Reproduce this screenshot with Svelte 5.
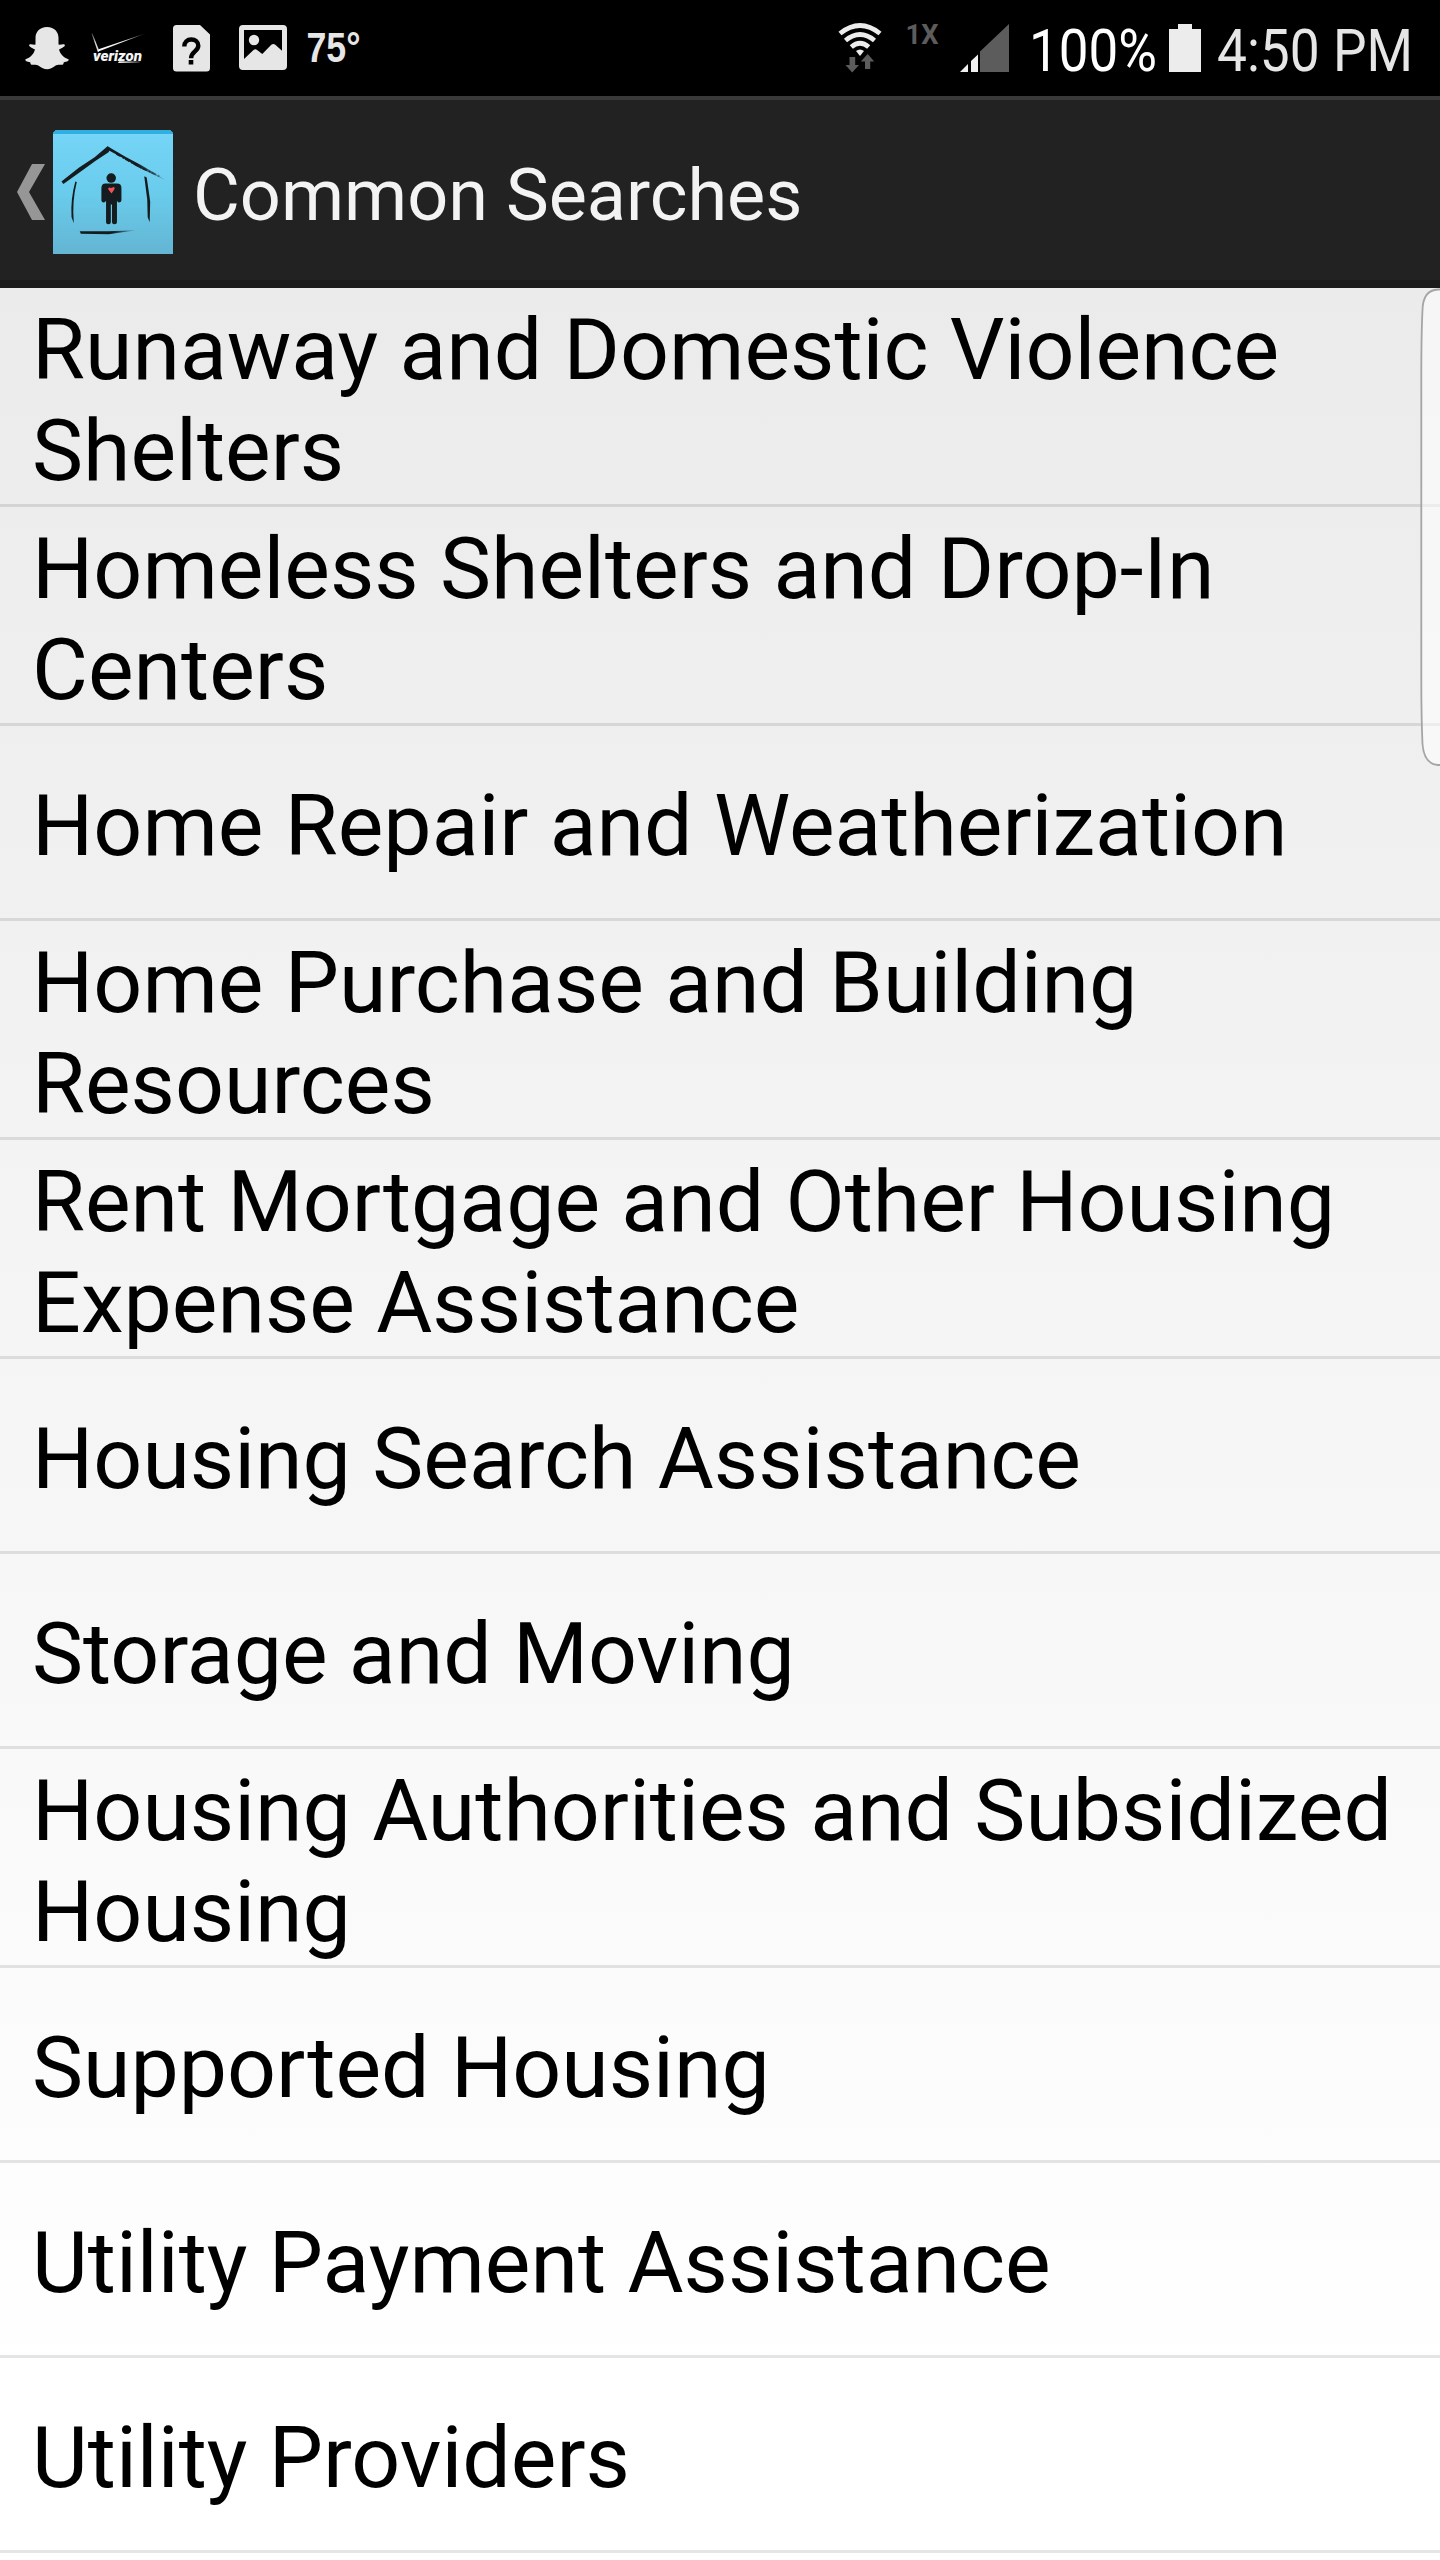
<script>
  const searches = [
    'Runaway and Domestic Violence Shelters',
    'Homeless Shelters and Drop-In Centers',
    'Home Repair and Weatherization',
    'Home Purchase and Building Resources',
    'Rent Mortgage and Other Housing Expense Assistance',
    'Housing Search Assistance',
    'Storage and Moving',
    'Housing Authorities and Subsidized Housing',
    'Supported Housing',
    'Utility Payment Assistance',
    'Utility Providers'
  ];
</script>

<div class="screen">
  <div class="status">
    <div class="group">
      <!-- ghost notification -->
      <svg class="ghost" width="44" height="96" viewBox="25 0 44 96" fill="#e6e6e6">
        <path d="M47 27c7.500 0 11.500 5 11.500 11v6.500c2 .6 5-1.200 6.200.2 1 1.500-2.500 3-5.700 4.800 1.500 5 4.500 8 9.500 9.800.8 1.500-1.500 2.500-4.700 3-.5 1 0 2-1.300 2.400-2.500.3-5-.5-7.500 1.300-2.500 2-5 3.200-8 3.200s-5.500-1.200-8-3.200c-2.500-1.800-5-1-7.500-1.300-1.300-.4-.8-1.400-1.300-2.400-3.200-.5-5.500-1.500-4.700-3 5-1.800 8-4.800 9.500-9.800-3.200-1.800-6.700-3.300-5.700-4.800 1.200-1.400 4.200.4 6.200-.2V38c0-6 4-11 11.500-11z" />
      </svg>
      <!-- carrier -->
      <svg class="carrier" width="55" height="96" viewBox="92 0 55 96">
        <defs>
          <linearGradient id="tail" x1="0" x2="1"><stop offset="0" stop-color="#fff" /><stop offset=".55" stop-color="#eee" /><stop offset="1" stop-color="#444" /></linearGradient>
          <linearGradient id="stem" x1="0" x2="0" y1="0" y2="1"><stop offset="0" stop-color="#444" /><stop offset=".5" stop-color="#eee" /></linearGradient>
          <linearGradient id="under" x1="0" x2="1"><stop offset="0" stop-color="#fff" /><stop offset="1" stop-color="#222" /></linearGradient>
        </defs>
        <path fill="url(#stem)" d="M92 33.500 L99 51 L98 51.500Z" stroke="url(#stem)" stroke-width=".6" />
        <path fill="url(#tail)" d="M97.500 51.500 L98.500 49.300 L146 33.300 L99 51.300Z" />
        <text x="93" y="61" class="verizon" textLength="49" lengthAdjust="spacingAndGlyphs">verizon</text>
        <path fill="url(#under)" d="M119 61.300H141L139 63H118Z" />
      </svg>
      <!-- unknown SIM -->
      <svg class="sim" width="37" height="96" viewBox="173 0 37 96">
        <path fill="#e6e6e6" d="M176.500 25H200L210 34.500V68a3.500 3.500 0 0 1-3.500 3.500h-30A3.500 3.500 0 0 1 173 68V28.500a3.500 3.500 0 0 1 3.500-3.500z" />
        <path fill="none" stroke="#000" stroke-width="4.400" d="M184.300 46.500c0-4.500 3-7 7-7s7 2.500 7 6.300c0 5.500-7.200 6-7.200 12.400" />
        <path d="M188.700 60h4.600v4.500h-4.600z" />
      </svg>
      <!-- picture -->
      <svg class="picture" width="48" height="96" viewBox="239 0 48 96">
        <path fill="#e6e6e6" fill-rule="evenodd" d="M243 25h40a4 4 0 0 1 4 4v37a4 4 0 0 1-4 4h-40a4 4 0 0 1-4-4V29a4 4 0 0 1 4-4zM244 30V59l9.500-9q1.800-1.300 3.600 0l5.200 4 9-9.300q2-1.500 4 0l6.700 6V30z" />
        <circle cx="254" cy="40" r="5.200" fill="#e6e6e6" />
      </svg>
      <svg class="temp" width="56" height="96" viewBox="307 0 56 96">
        <text x="306.500" y="62" class="degrees" textLength="54" lengthAdjust="spacingAndGlyphs">75°</text>
      </svg>
    </div>

    <div class="group">
      <!-- wifi -->
      <svg width="44" height="96" viewBox="837.500 0 44 96">
        <g fill="none" stroke="#ececec" stroke-width="4.800">
          <path d="M839.500 33.500Q859.500 17.500 879.500 33.500" />
          <path d="M845 40.500Q859.500 28.500 874 40.500" />
          <path d="M850.800 47Q859.500 39.500 868.200 47" />
        </g>
        <path fill="#ececec" d="M855.500 51q4-3 8 0l-4 5z" />
        <path fill="#5c5c5c" d="M849 57h5.700v8h3.800L851.700 72.500 845 65h4zM864.500 69h5.200v-7.500h4L867.200 54 860.300 61.500h4.200z" />
      </svg>
      <svg class="net" width="34" height="96" viewBox="905 0 34 96">
        <text x="905.500" y="44" class="onex" textLength="33" lengthAdjust="spacingAndGlyphs">1X</text>
      </svg>
      <!-- signal -->
      <svg class="signal" width="49" height="96" viewBox="960 0 49 96">
        <path fill="#5c5c5c" d="M980 51.500 1009 24V72H980z" />
        <path fill="#f0f0f0" d="M960 72 968 64V72zM971 61 978 54.500V72H971z" />
      </svg>
      <svg class="percent" width="124" height="96" viewBox="1031 0 124 96">
        <text x="1029" y="71" class="clock bright" textLength="128" lengthAdjust="spacingAndGlyphs">100%</text>
      </svg>
      <!-- battery -->
      <svg class="battery" width="32" height="96" viewBox="1169 0 32 96">
        <path fill="#ececec" d="M1178 24h14v5h9v43h-32V29h9z" />
      </svg>
      <svg class="time" width="196" height="96" viewBox="1216 0 196 96">
        <text x="1217" y="71" class="clock" textLength="196" lengthAdjust="spacingAndGlyphs">4:50 PM</text>
      </svg>
    </div>
  </div>

  <header>
    <svg class="back" width="28" height="56" viewBox="0 0 28 56" fill="#969696"><path d="M15 0H28L12 28 28 56H15L0 28z" /></svg>
    <svg class="logo" width="120" height="124" viewBox="0 0 121 125" preserveAspectRatio="none">
      <defs>
        <linearGradient id="sky" x1="0" x2="0" y1="0" y2="1"><stop offset="0" stop-color="#76d5f8" /><stop offset=".5" stop-color="#6accec" /><stop offset="1" stop-color="#63b5d3" /></linearGradient>
        <linearGradient id="roof" gradientUnits="userSpaceOnUse" x1="85" x2="115" y1="0" y2="0"><stop offset="0" stop-color="#141c20" /><stop offset="1" stop-color="#141c20" stop-opacity=".1" /></linearGradient>
        <linearGradient id="floor" gradientUnits="userSpaceOnUse" x1="60" x2="86" y1="0" y2="0"><stop offset="0" stop-color="#141c20" /><stop offset="1" stop-color="#141c20" stop-opacity=".1" /></linearGradient>
      </defs>
      <path fill="url(#sky)" d="M3 0H118L121 3V125H0V3z" />
      <path fill="#2fb0e0" d="M3 0H118L121 3V4H0V3z" />
      <path fill="#141c20" d="M8.500 52 26 38 42 27.500 55 16.500 58 19 56 22.500 43 31 27 42.500 10.500 54.500z" />
      <path fill="url(#roof)" d="M55 16.500 73 27 90 36 101 42.500 114 51 100 44 86 37.500 72 29 55 20z" />
      <path fill="none" stroke="url(#roof)" stroke-width="2" stroke-dasharray="5 2 2 1" d="M64 24 87 37 108 47" />
      <path fill="#141c20" d="M22.500 52 24 52.500Q19 72 21 94L18.700 88Q17.500 70 22.500 52zM92 46.500 94.500 48 98 72 97.500 93 95.500 88 95 70z" />
      <path fill="url(#floor)" d="M27 102 56 102 84 101 56 105 28 104.500z" />
      <g fill="#141c20">
        <circle cx="58.700" cy="48.500" r="4.800" />
        <path d="M53 54H64.500Q69 54 69 58.500V71Q68.500 73 66.500 73 65 73 64.500 71V93Q64.500 95 62 95 59.500 95 59.500 93V75H58.300V93Q58.300 95 55.800 95 53.500 95 53.500 93V71Q53 73 51 73 49 73 48.800 71V58.500Q49 54 53 54z" />
      </g>
      <path fill="#f0525b" d="M59 64 55.500 59.500Q56 57 58.500 58.500L61.500 57.500Q63 58.500 61.500 60.500z" />
    </svg>
    <h1>Common Searches</h1>
  </header>

  <main>
    <ul>
      {#each searches as label}
        <li>{label}</li>
      {/each}
    </ul>
    <svg class="handle" width="20" height="480" viewBox="0 0 20 480">
      <path fill="#fff" fill-opacity=".55" stroke="#a5a5a5" stroke-width="1.800" d="M22 1.500H18Q3 2 2.500 22Q1.300 45 1.300 90V390Q1.300 430 2.500 456Q4 476 18 477H22" />
    </svg>
  </main>
</div>

<style>
  :global(body) { margin: 0; background: #fff; }
  .screen {
    width: 1440px;
    height: 2560px;
    display: flex;
    flex-direction: column;
    overflow: hidden;
    font-family: Roboto, sans-serif;
  }
  .status {
    height: 96px;
    flex: none;
    display: flex;
    justify-content: space-between;
    padding: 0 28px 0 25px;
    box-sizing: border-box;
    background: #000;
  }
  .group { display: flex; }
  .group svg { display: block; flex: none; overflow: visible; }
  .carrier { margin-left: 23px; }
  .sim { margin-left: 26px; }
  .picture { margin-left: 29px; }
  .temp { margin-left: 20px; }
  .net { margin-left: 23.500px; }
  .signal { margin-left: 21px; }
  .percent { margin-left: 22px; }
  .battery { margin-left: 14px; }
  .time { margin-left: 15px; }
  .verizon { font: italic 900 14.500px Roboto, sans-serif; fill: #f4f4f4; }
  .degrees { font: 700 42px "Liberation Sans", sans-serif; fill: #e6e6e6; }
  .onex { font: 700 28px Roboto, sans-serif; fill: #5c5c5c; }
  .clock { font: 400 60px Roboto, sans-serif; fill: #e6e6e6; }
  .bright { fill: #fff; }

  header {
    height: 192px;
    flex: none;
    box-sizing: border-box;
    display: flex;
    align-items: center;
    padding-left: 17px;
    border-top: 4px solid #393939;
    border-bottom: 8px solid #1b1b1b;
    background: #222;
  }
  .back { margin: 4px 8px 0 0; flex: none; }
  .logo { margin-top: 4px; flex: none; }
  h1 {
    margin: 12px 0 0 20px;
    font-size: 72px;
    line-height: 84px;
    font-weight: 400;
    color: #f3f3f3;
    white-space: nowrap;
  }
  main {
    position: relative;
    flex: 1;
    background: linear-gradient(#ebebeb, #fff 94%);
  }
  ul { margin: 0; padding: 0; list-style: none; }
  li {
    box-sizing: border-box;
    min-height: 195px;
    display: flex;
    align-items: center;
    padding: 10.800px 32px 3.200px;
    border-bottom: 3px solid rgba(0, 0, 0, 0.1);
    font-size: 86px;
    line-height: 101px;
    color: #000;
  }
  .handle { position: absolute; top: 0; right: 0; display: block; }
</style>
